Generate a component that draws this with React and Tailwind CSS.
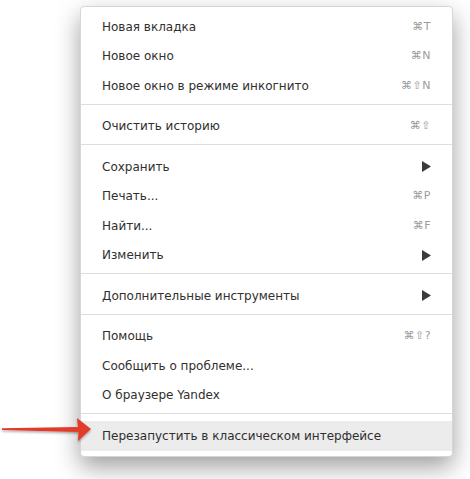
import React from "react";

const Tri = () => (
  <svg width="9" height="11" viewBox="0 0 9 11" className="block">
    <path d="M0 0 L9 5.5 L0 11 Z" fill="#3a3a3a" />
  </svg>
);

function Row({ label, sc, arrow, hl }) {
  return (
    <div
      className={`flex h-[29.5px] items-center justify-between pl-[21px] pr-[21px] ${hl ? "bg-[#ececec]" : ""}`}
    >
      <span className="text-[12px] text-[#2f2f2f]">{label}</span>
      {sc && <span className="text-[11px] tracking-[0.5px] text-[#9a9a9a]">{sc}</span>}
      {arrow && <Tri />}
    </div>
  );
}

const Sep = () => <div className="mt-[3px] mb-[7px] h-px bg-[#dedede]" />;

export default function App() {
  return (
    <div className="relative h-[479px] w-[470px] bg-white font-['DejaVu_Sans',sans-serif]">
      <div className="ml-[80px] pt-[6px] w-[373px]">
        <div className="rounded-[4px] border border-[#d6d6d6] bg-white pt-[5px] pb-[5px] shadow-[0_10px_24px_rgba(0,0,0,0.38)]">
          <Row label="Новая вкладка" sc="⌘T" />
          <Row label="Новое окно" sc="⌘N" />
          <Row label="Новое окно в режиме инкогнито" sc="⌘⇧N" />
          <Sep />
          <Row label="Очистить историю" sc="⌘⇧" />
          <Sep />
          <Row label="Сохранить" arrow />
          <Row label="Печать..." sc="⌘P" />
          <Row label="Найти..." sc="⌘F" />
          <Row label="Изменить" arrow />
          <Sep />
          <Row label="Дополнительные инструменты" arrow />
          <Sep />
          <Row label="Помощь" sc="⌘⇧?" />
          <Row label="Сообщить о проблеме..." />
          <Row label="О браузере Yandex" />
          <Sep />
          <Row label="Перезапустить в классическом интерфейсе" hl />
        </div>
      </div>
      <svg
        className="absolute left-0 top-[416px]"
        width="96"
        height="28"
        viewBox="0 0 96 28"
      >
        <defs>
          <filter id="s" x="-10%" y="-30%" width="130%" height="180%">
            <feDropShadow dx="0" dy="1.5" stdDeviation="1.2" floodColor="#000" floodOpacity="0.35" />
          </filter>
        </defs>
        <path
          d="M2 12.2 L78 11 L77 2 L91 13 L78 25 L78.5 16 L2 14 Z"
          fill="#e23b2c"
          filter="url(#s)"
        />
      </svg>
    </div>
  );
}
